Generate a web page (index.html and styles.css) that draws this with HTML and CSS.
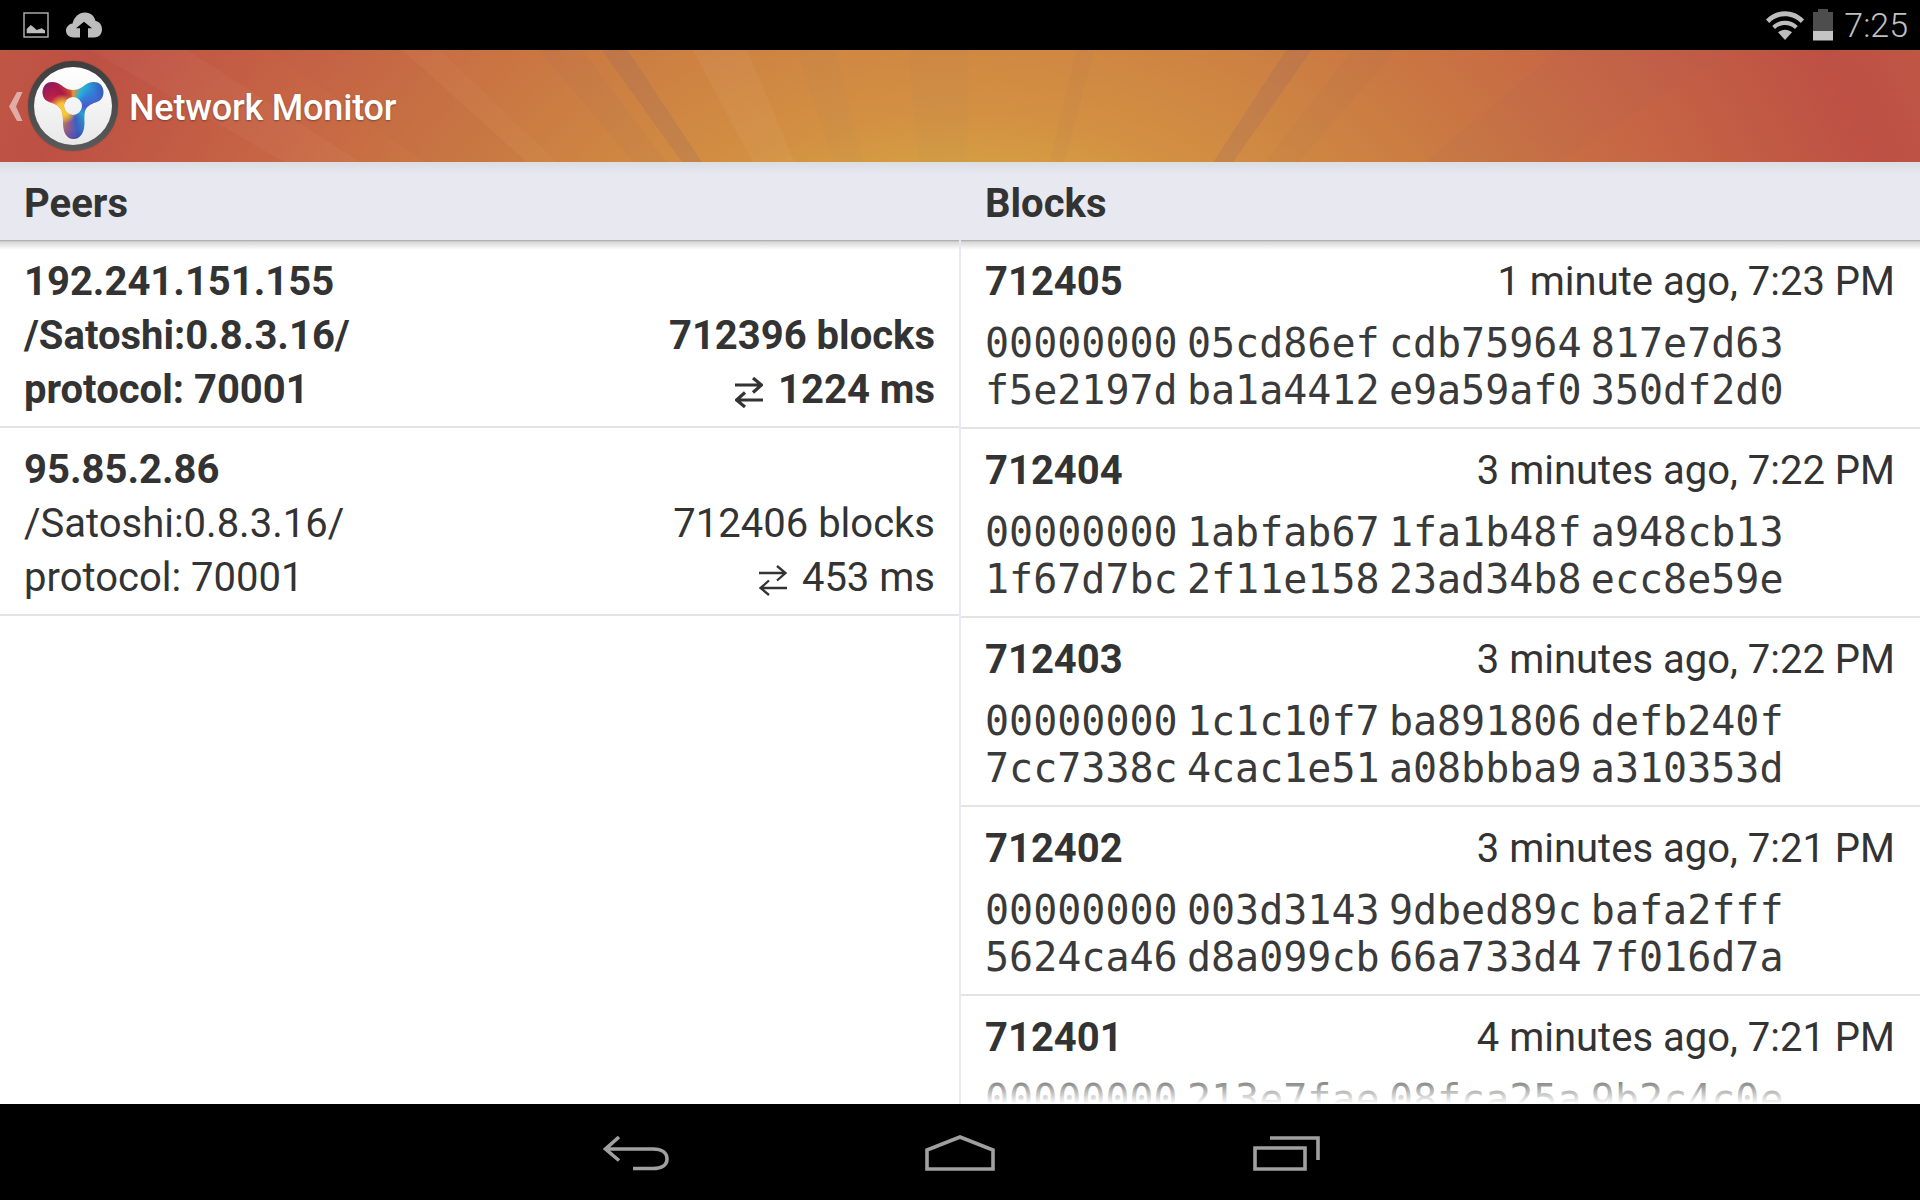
FILE: index.html
```html
<!DOCTYPE html>
<html lang="en">
<head>
<meta charset="utf-8">
<title>Network Monitor</title>
<link rel="stylesheet" href="styles.css">
</head>
<body>
<div class="screen">
  <header class="status">
    <div class="status-left">
      <svg class="ic-img" viewBox="0 0 26 26"><rect x="1" y="1" width="24" height="24" fill="none" stroke="#b4b4b4" stroke-width="1.4"/><path d="M3.700 21.300V17L7.700 13L11 15.500L13.700 18L18.700 16.300L22 18.500V21.300Z" fill="#bdbdbd"/></svg>
      <svg class="ic-cloud" viewBox="0 0 36 26"><path fill-rule="evenodd" fill="#bdbdbd" d="M8 25.500C3 25.500 0 22.500 0 18.500C0 15 3 12 6.500 11.500C8 5 13 0.500 19 0.500C25 0.500 28.500 4.500 29.500 9C33.500 9.500 36 13 36 17.500C36 22.500 32.500 25.500 28 25.500H22V16.300H26L18 9.700L10 16.300H14V25.500Z"/></svg>
    </div>
    <div class="status-right">
      <svg class="ic-wifi" viewBox="0 0 38 30"><path fill="#bdbdbd" d="M0 9.500C10 -1.500 28 -1.500 38 9.500L34.800 13C26.500 4 11.500 4 3.200 13Z"/><path fill="#bdbdbd" d="M6.200 16C13 9 25 9 31.800 16L29 19C23.500 13.500 14.500 13.500 9 19Z"/><path fill="#bdbdbd" d="M12 22.300C16 18.800 22 18.800 26 22.300L19 30Z"/></svg>
      <svg class="ic-batt" viewBox="0 0 22 32"><path fill="#4d4d4d" d="M6 0H16V3H21V22H1V3H6Z"/><rect x="1" y="22" width="20" height="9.500" fill="#c4c4c4"/></svg>
      <span class="clock">7:25</span>
    </div>
  </header>
  <div class="actionbar">
    <svg class="caret" viewBox="0 0 14 29"><path d="M8 0H13.500L7 14.500L13.500 29H8L0 14.500Z" fill="#fff" fill-opacity=".52"/></svg>
    <div class="logo"><div class="logo-face"><div class="trefoil"></div></div></div>
    <span class="title">Network Monitor</span>
  </div>
  <main class="panes">
    <section class="pane pane-peers">
      <h2 class="pane-head">Peers</h2>
      <div class="pane-body">
        <article class="peer peer-sync">
          <div class="peer-line"><span>192.241.151.155</span></div>
          <div class="peer-line"><span>/Satoshi:0.8.3.16/</span><span>712396 blocks</span></div>
          <div class="peer-line"><span>protocol: 70001</span><span class="ping"><svg class="ic-swap" viewBox="0 0 28 31"><path d="M0 8H26M18 1L26.500 8L18 15.500M28 23H2M10 15.500L1.500 23L10 30" fill="none" stroke="#333" stroke-width="3.200"/></svg>1224 ms</span></div>
        </article>
        <article class="peer">
          <div class="peer-line"><span class="strong">95.85.2.86</span></div>
          <div class="peer-line"><span>/Satoshi:0.8.3.16/</span><span>712406 blocks</span></div>
          <div class="peer-line"><span>protocol: 70001</span><span class="ping"><svg class="ic-swap" viewBox="0 0 28 31"><path d="M0 8H26M18 1L26.500 8L18 15.500M28 23H2M10 15.500L1.500 23L10 30" fill="none" stroke="#333" stroke-width="2.300"/></svg>453 ms</span></div>
        </article>
      </div>
    </section>
    <section class="pane pane-blocks">
      <h2 class="pane-head">Blocks</h2>
      <div class="pane-body">
        <article class="block">
          <div class="block-top"><span class="strong">712405</span><span>1 minute ago, 7:23 PM</span></div>
          <div class="hash">00000000 05cd86ef cdb75964 817e7d63<br>f5e2197d ba1a4412 e9a59af0 350df2d0</div>
        </article>
        <article class="block">
          <div class="block-top"><span class="strong">712404</span><span>3 minutes ago, 7:22 PM</span></div>
          <div class="hash">00000000 1abfab67 1fa1b48f a948cb13<br>1f67d7bc 2f11e158 23ad34b8 ecc8e59e</div>
        </article>
        <article class="block">
          <div class="block-top"><span class="strong">712403</span><span>3 minutes ago, 7:22 PM</span></div>
          <div class="hash">00000000 1c1c10f7 ba891806 defb240f<br>7cc7338c 4cac1e51 a08bbba9 a310353d</div>
        </article>
        <article class="block">
          <div class="block-top"><span class="strong">712402</span><span>3 minutes ago, 7:21 PM</span></div>
          <div class="hash">00000000 003d3143 9dbed89c bafa2fff<br>5624ca46 d8a099cb 66a733d4 7f016d7a</div>
        </article>
        <article class="block">
          <div class="block-top"><span class="strong">712401</span><span>4 minutes ago, 7:21 PM</span></div>
          <div class="hash">00000000 213e7fae 08fca25a 9b2c4c0e</div>
        </article>
        <div class="fade"></div>
      </div>
    </section>
  </main>
  <nav class="navbar">
    <svg class="nav-back" viewBox="0 0 66 36"><path d="M16 2L2.500 14L16 25.500M2.500 14H50C59 14 64 18 64 24C64 30 59 33.500 50 33.500H30" fill="none" stroke="#a0a0a0" stroke-width="3.600"/></svg>
    <svg class="nav-home" viewBox="0 0 70 36"><path d="M2 34V15L35 2L68 15V34Z" fill="none" stroke="#a0a0a0" stroke-width="3.600"/></svg>
    <svg class="nav-recent" viewBox="0 0 67 36"><path d="M2 13H52V34H2Z" fill="none" stroke="#a0a0a0" stroke-width="3.600"/><path d="M17 3H65V25" fill="none" stroke="#a0a0a0" stroke-width="3.600"/></svg>
  </nav>
</div>
</body>
</html>
```
FILE: styles.css
```css
* { box-sizing: border-box; }
html, body { margin: 0; height: 100%; }
body { background: #000; font-family: Roboto, "Liberation Sans", sans-serif; color: #333; }
.screen { width: 1920px; height: 1200px; display: flex; flex-direction: column; overflow: hidden; background: #fff; }

.status { height: 50px; flex: none; background: #000; display: flex; justify-content: space-between; align-items: center; padding: 0 12px 0 23px; }
.status-left, .status-right { display: flex; align-items: center; }
.ic-img { width: 26px; height: 26px; margin-right: 17px; }
.ic-cloud { width: 36px; height: 26px; }
.ic-wifi { width: 38px; height: 30px; margin-right: 8px; }
.ic-batt { width: 22px; height: 32px; margin-right: 10px; }
.clock { color: #c0c0c0; font-size: 34px; font-weight: 300; }

.actionbar {
  height: 112px; flex: none; display: flex; align-items: center; padding-left: 9px; position: relative;
  background:
    conic-gradient(from -90deg at 960px 502px,
      rgba(255,255,255,0) 0 30deg,
      rgba(255,255,255,.03) 30deg 33deg,
      rgba(120,60,80,0) 33deg 36deg,
      rgba(120,60,80,.03) 36deg 42deg,
      rgba(255,255,255,.025) 42deg 44deg,
      rgba(255,255,255,0) 44deg 50deg,
      rgba(130,90,110,.06) 50deg 53deg,
      rgba(255,255,255,0) 53deg 54.500deg,
      rgba(130,90,110,.16) 54.500deg 56.500deg,
      rgba(255,255,255,0) 56.500deg 62deg,
      rgba(255,255,255,.04) 62deg 67deg,
      rgba(255,255,255,0) 67deg 72deg,
      rgba(120,120,120,.04) 72deg 76deg,
      rgba(255,255,255,0) 76deg 84deg,
      rgba(120,120,120,.04) 84deg 91deg,
      rgba(255,255,255,0) 91deg 103deg,
      rgba(130,90,110,.05) 103deg 105deg,
      rgba(255,255,255,0) 105deg 123deg,
      rgba(130,90,110,.16) 123deg 125deg,
      rgba(255,255,255,0) 125deg 128deg,
      rgba(130,90,110,.05) 128deg 131deg,
      rgba(255,255,255,0) 131deg 140deg,
      rgba(140,90,110,.06) 140deg 147deg,
      rgba(255,255,255,0) 147deg 180deg),
    radial-gradient(circle 1120px at 960px 502px, #dcb83f 0, #d6aa42 340px, #d39042 440px, #cb7d42 600px, #c76744 780px, #bd5044 1000px, #c05a45 1120px);
}
.caret { width: 14px; height: 29px; flex: none; margin-right: 5px; }
.logo { width: 90px; height: 90px; flex: none; border-radius: 50%; background: linear-gradient(#3e3e3e, #5a5a5a); padding: 6px; box-shadow: 0 0 1px rgba(0,0,0,.5); }
.logo-face { width: 78px; height: 78px; border-radius: 50%; background: linear-gradient(#fff, #e8e8e8); position: relative; }
.trefoil {
  position: absolute; left: 0; top: 0; width: 78px; height: 78px;
  background:
    radial-gradient(circle at 29px 42px, rgba(250,205,50,.95) 6px, rgba(250,190,50,0) 15px),
    radial-gradient(circle at 39px 39px, rgba(60,30,140,0) 24px, rgba(60,30,140,.3) 34px),
    conic-gradient(from 0deg at 39px 39px, #e09a30 0deg, #28b0d8 30deg, #3080d8 55deg, #4a58c8 90deg, #28a0d0 130deg, #3a60c0 170deg, #8a5a98 190deg, #c08040 215deg, #e09028 250deg, #c02048 285deg, #a8184a 320deg, #d05030 350deg, #e09a30 360deg);
  clip-path: path(evenodd, "M39 23C33 23 30 20 27 18C22 14 14 14 11 18C7 23 8 31 13 34C17 36 23 37 26 41C29 45 29 51 29 56C29 66 33 72 39.500 72C46 72 50.500 66 50.500 56C50.500 51 50 45 52 42C55 37 61 36 65 34C70 31 71 23 67 18C64 14 56 14 51 18C48 20 45 23 39 23ZM48 39A9 9 0 1 0 30 39A9 9 0 1 0 48 39Z");
}
.title { color: #fff; font-size: 36px; font-weight: 500; margin-left: 11px; padding-top: 4px; text-shadow: 0 1px 2px rgba(0,0,0,.35); letter-spacing: -.2px; }

.panes { flex: 1; display: flex; min-height: 0; }
.pane { display: flex; flex-direction: column; min-height: 0; }
.pane-peers { width: 959px; flex: none; }
.pane-blocks { flex: 1; min-width: 0; }
.pane-head { margin: 0; height: 78px; flex: none; background: linear-gradient(#dcdde3 0, #e7e8f0 12px); display: flex; align-items: center; padding: 4px 0 0 24px; font-size: 40px; font-weight: 700; color: #333; }
.pane-blocks .pane-head { padding-left: 26px; }
.pane-body { flex: 1; min-height: 0; overflow: hidden; position: relative; }
.pane-body::before { content: ""; position: absolute; left: 0; right: 0; top: 0; height: 10px; background: linear-gradient(#a4a4a6, #d8d8d8 2px, rgba(255,255,255,0)); }
.pane-blocks .pane-body { border-left: 2px solid #e7e8f0; }

.peer { height: 188px; border-bottom: 2px solid #e3e3e7; padding: 15px 24px 0 24px; font-size: 40px; }
.peer-sync { font-weight: 700; }
.peer-line { display: flex; justify-content: space-between; height: 54px; line-height: 54px; }
.strong { font-weight: 700; }
.ping { display: flex; align-items: center; }
.ic-swap { width: 28px; height: 31px; margin-right: 15px; margin-top: 4px; }

.block { height: 189px; border-bottom: 2px solid #e3e3e7; padding: 15px 25px 0 24px; }
.block-top { display: flex; justify-content: space-between; font-size: 40px; height: 54px; line-height: 54px; }
.hash { font-family: "DejaVu Sans Mono", "Liberation Mono", monospace; font-size: 40px; word-spacing: -14.800px; line-height: 47px; margin-top: 11px; color: #3a3a3a; white-space: nowrap; font-weight: 400; }
.fade { position: absolute; left: 0; right: 0; bottom: 0; height: 36px; background: linear-gradient(rgba(255,255,255,0), #fff); }

.navbar { height: 96px; flex: none; background: #000; display: flex; justify-content: center; align-items: center; gap: 256px; padding: 2px 0 0 2px; }
.nav-back { width: 66px; height: 36px; }
.nav-home { width: 70px; height: 36px; }
.nav-recent { width: 67px; height: 36px; margin-left: 2px; }
```
